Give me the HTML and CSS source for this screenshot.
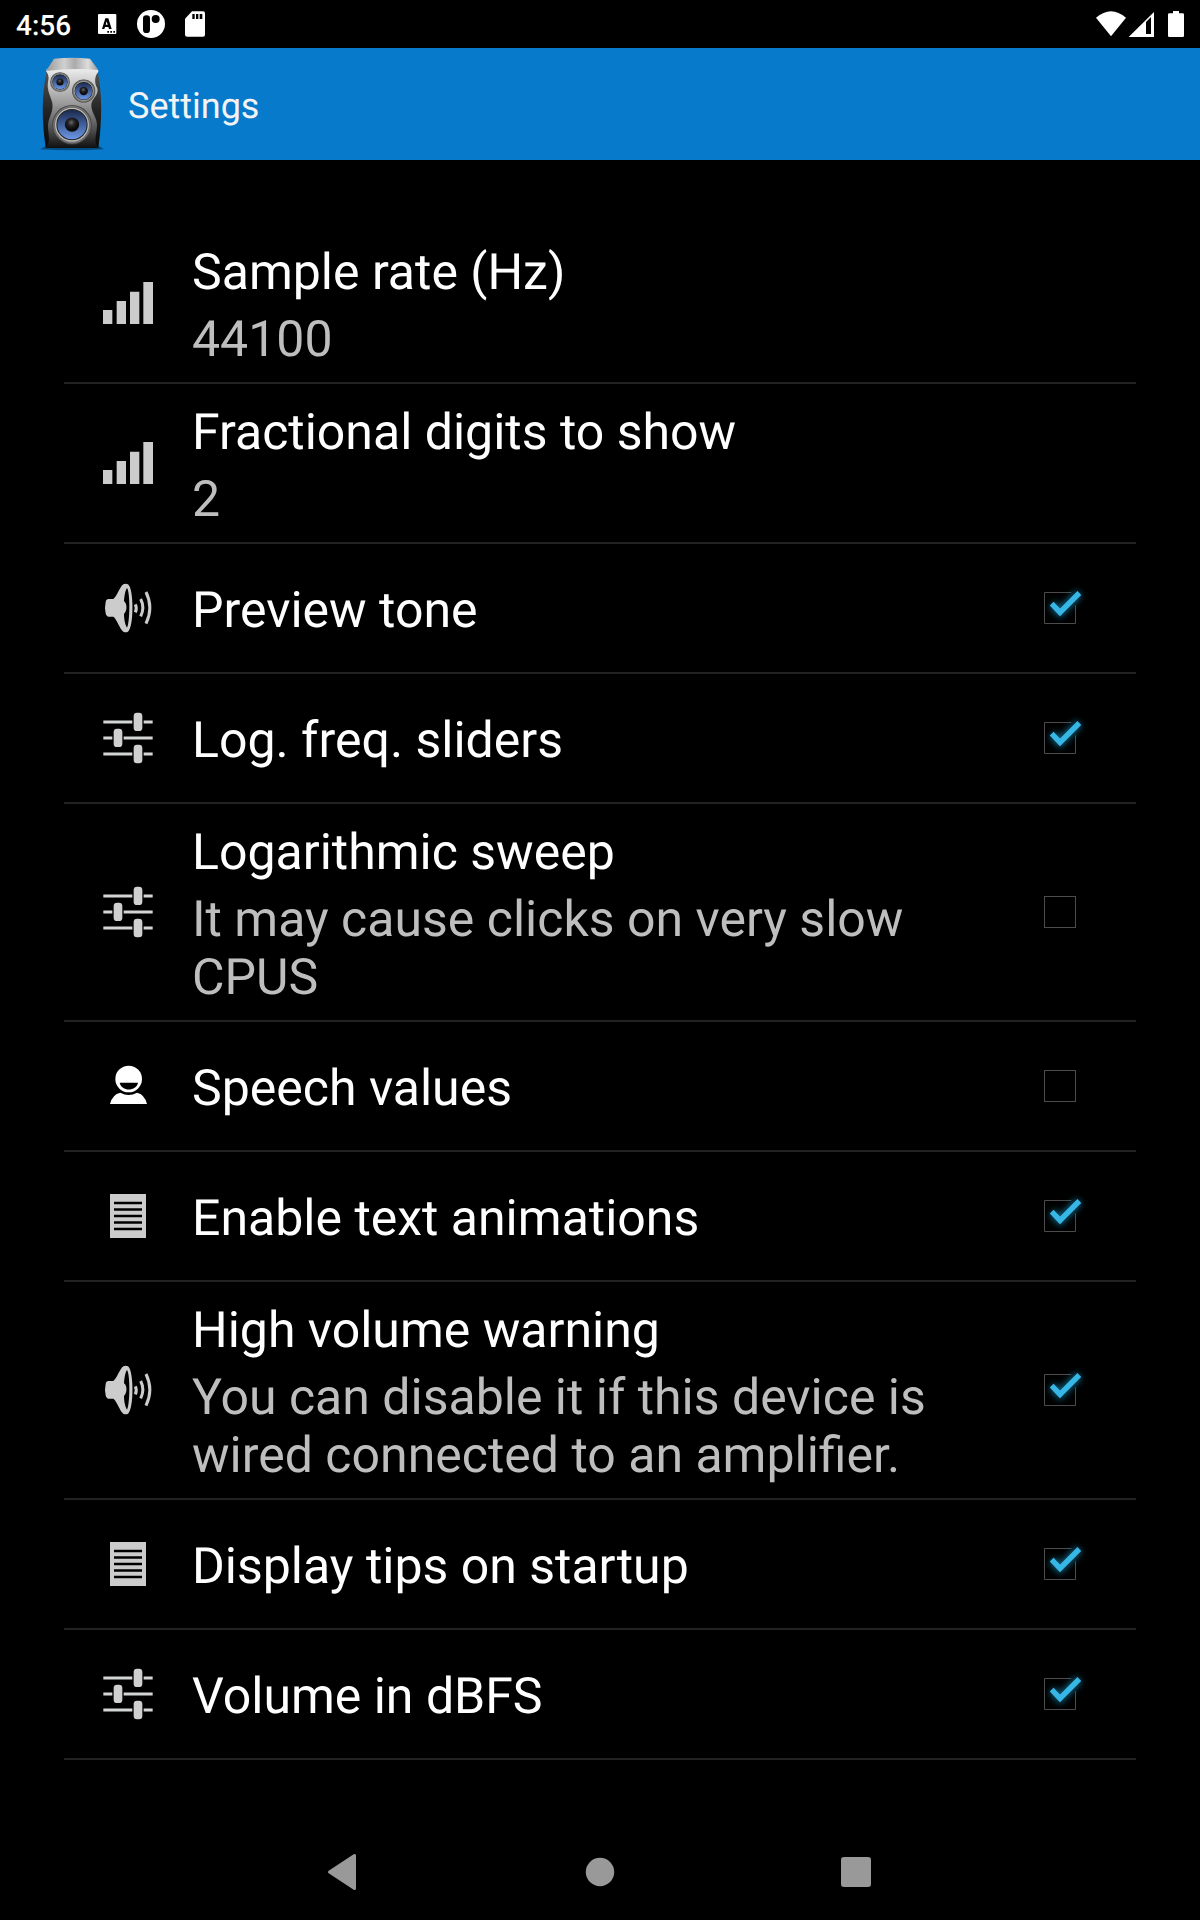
FILE: index.html
```html
<!DOCTYPE html>
<html lang="en">
<head>
  <meta charset="UTF-8">
  <meta name="viewport" content="width=device-width, initial-scale=1.0">
  <title>Settings</title>
  <link rel="stylesheet" href="styles.css">
</head>
<body>
  <!-- shared icons -->
  <svg class="defs" width="0" height="0">
    <symbol id="signal" viewBox="114 129 180 180">
      <path fill="#ccc" d="M129 240h28v42h-28zM170 213h28v69h-28zM210 185h28v97h-28zM250 156h29v126h-29z"/>
    </symbol>
    <symbol id="speaker" viewBox="24 24 180 180">
      <path fill="#ccc" d="M54 87H70C82 78 88 52 100 43Q107 40 114 43C132 55 132 173 114 185Q107 188 100 185C88 175 82 149 70 140H54Q47 138 47 130Q43 113 47 96Q47 88 54 87Z"/>
      <path fill="#000" d="M111 54C106 61 103 78 102 94C112 101 112 123 102 132C102 150 106 165 111 173C120 160 121 66 111 54Z"/>
      <path fill="none" stroke="#ccc" stroke-width="9" d="M136 103Q142 115 136 127M152 87Q165 113 152 139M168 66Q191 113 168 161"/>
    </symbol>
    <symbol id="sliders" viewBox="24 24 180 180">
      <path stroke="#d4d6d6" stroke-width="8.500" d="M40 66H127M161 66H188M40 114H67M101 114H188M40 162H127M161 162H188"/>
      <g fill="#d0d0d0">
        <rect x="131" y="38" width="26" height="55" rx="10"/>
        <rect x="71" y="86" width="26" height="55" rx="10"/>
        <rect x="131" y="134" width="26" height="56" rx="10"/>
      </g>
    </symbol>
    <symbol id="person" viewBox="24 18 180 180">
      <circle cx="116" cy="87" r="40" fill="#fff"/>
      <path fill="#000" d="M89 98H144C139 125 94 125 89 98Z"/>
      <path fill="#fff" d="M60 162Q67 133 91 128Q116 142 141 128Q164 133 171 162Z"/>
    </symbol>
    <symbol id="page" viewBox="24 18 180 180">
      <path fill="#ccc" d="M60 42H168V174H60Z"/>
      <path stroke="#000" stroke-width="7.5" d="M72 69H156M72 88.500H156M72 108H156M72 127.500H156M72 147H156"/>
    </symbol>
    <symbol id="unchecked" viewBox="30 54 180 180">
      <rect x="73.500" y="97.500" width="93" height="93" fill="none" stroke="#4c4c4c" stroke-width="3"/>
    </symbol>
    <symbol id="checked" viewBox="30 54 180 180">
      <path fill="none" stroke="#4c4c4c" stroke-width="3" d="M154 97.500H73.500V190.500H166.500V136"/>
      <path class="glow" d="M96 132L120 157L178 99"/>
      <path fill="none" stroke="#37b7e6" stroke-width="16" d="M95 131L120 157L178 99"/>
    </symbol>
  </svg>

  <header class="status-bar">
    <span class="time">4:56</span>
    <svg width="39" height="48" viewBox="291 0 117 144">
      <rect x="294" y="42" width="55" height="60" rx="3" fill="#fff"/>
      <path fill="#000" fill-rule="evenodd" d="M316 55H325L335 87H327L325 81H315L313 87H306ZM320 64L317 74H323Z"/>
      <path fill="#000" d="M322 93h5v5h-5zM331 93h5v5h-5zM340 93h5v5h-5z"/>
    </svg>
    <svg width="48" height="48" viewBox="408 0 144 144">
      <circle cx="453" cy="72" r="42" fill="#fff"/>
      <rect x="429" y="46" width="21" height="53" rx="10"/>
      <circle cx="467" cy="57" r="12"/>
    </svg>
    <svg width="30" height="48" viewBox="552 0 90 144">
      <path fill="#fff" d="M576 34H609Q615 34 615 40V104Q615 110 609 110H562Q555 110 555 104V56Z"/>
      <path fill="#000" d="M577 42h7v15h-7zM588 42h7v15h-7zM599 42h8v15h-8z"/>
    </svg>
    <div class="status-right">
      <svg width="33" height="48" viewBox="105 0 99 144">
        <path fill="#fff" d="M108 53Q153 14 198 53L153 109Z"/>
      </svg>
      <svg width="32" height="48" viewBox="204 0 96 144">
        <path fill="#fff" fill-rule="evenodd" d="M206 111L282 36V111ZM258 66V102H273V51Z"/>
      </svg>
      <svg width="32" height="48" viewBox="300 0 96 144">
        <path fill="#fff" d="M339 33H357V40H368Q372 40 372 44V107Q372 111 368 111H328Q324 111 324 107V44Q324 40 328 40H339Z"/>
      </svg>
    </div>
  </header>

  <div class="action-bar">
    <svg width="90" height="112" viewBox="0 9 270 336">
      <defs>
        <linearGradient id="top">
          <stop offset="0" stop-color="#999"/>
          <stop offset=".35" stop-color="#d0d0d0"/>
          <stop offset=".55" stop-color="#aaa"/>
          <stop offset=".8" stop-color="#ddd"/>
          <stop offset="1" stop-color="#999"/>
        </linearGradient>
        <linearGradient id="front" x2="0" y2="1">
          <stop offset="0" stop-color="#eee"/>
          <stop offset=".45" stop-color="#999"/>
          <stop offset=".75" stop-color="#555"/>
          <stop offset="1" stop-color="#111"/>
        </linearGradient>
        <linearGradient id="side" x2="0" y2="1">
          <stop offset="0" stop-color="#555"/>
          <stop offset=".5" stop-color="#252525"/>
          <stop offset="1" stop-color="#080808"/>
        </linearGradient>
        <linearGradient id="cone" x2="0" y2="1">
          <stop offset="0" stop-color="#1b2a4e"/>
          <stop offset=".5" stop-color="#41609c"/>
          <stop offset="1" stop-color="#6c98e6"/>
        </linearGradient>
        <radialGradient id="cap" cx=".45" cy=".35">
          <stop offset="0" stop-color="#666"/>
          <stop offset=".5" stop-color="#222"/>
          <stop offset="1" stop-color="#0b0b0b"/>
        </radialGradient>
        <g id="driver">
          <circle r="58" fill="#444"/>
          <circle r="54" fill="#666" stroke="#888" stroke-width="2"/>
          <circle r="48" fill="#222" stroke="#bbb" stroke-width="4"/>
          <circle r="43" fill="url(#cone)"/>
          <circle r="21" fill="url(#cap)"/>
        </g>
      </defs>
      <path fill="#024b80" d="M30 313L48 303H206L222 313Q126 319 30 313Z"/>
      <path fill="url(#side)" d="M50 78H203Q223 180 205 308H47Q28 180 50 78Z"/>
      <path fill="url(#front)" d="M48 78Q50 70 60 69H195Q206 72 205 80C194 93 192 112 202 130C207 152 185 160 184 180C183 201 201 217 201 240C201 270 188 288 206 308H47C65 287 53 268 54 240C56 215 71 201 67 175C62 150 48 137 55 105Q58 91 48 78Z"/>
      <path fill="url(#top)" d="M72 41Q126 35 180 41L205 75Q126 68 48 78Z"/>
      <use href="#driver" transform="translate(90 111) scale(.51)"/>
      <use href="#driver" transform="translate(161 138) scale(.6)"/>
      <use href="#driver" transform="translate(126 239) scale(1.02)"/>
    </svg>
    <h1>Settings</h1>
  </div>

  <main class="settings">
    <div class="row">
      <svg class="icon"><use href="#signal"/></svg>
      <div class="text">
        <div class="title">Sample rate (Hz)</div>
        <div class="summary">44100</div>
      </div>
    </div>
    <div class="row">
      <svg class="icon"><use href="#signal"/></svg>
      <div class="text">
        <div class="title">Fractional digits to show</div>
        <div class="summary">2</div>
      </div>
    </div>
    <div class="row">
      <svg class="icon"><use href="#speaker"/></svg>
      <div class="text"><div class="title">Preview tone</div></div>
      <svg class="check"><use href="#checked"/></svg>
    </div>
    <div class="row">
      <svg class="icon"><use href="#sliders"/></svg>
      <div class="text"><div class="title">Log. freq. sliders</div></div>
      <svg class="check"><use href="#checked"/></svg>
    </div>
    <div class="row">
      <svg class="icon"><use href="#sliders"/></svg>
      <div class="text">
        <div class="title">Logarithmic sweep</div>
        <div class="summary">It may cause clicks on very slow CPUS</div>
      </div>
      <svg class="check"><use href="#unchecked"/></svg>
    </div>
    <div class="row">
      <svg class="icon"><use href="#person"/></svg>
      <div class="text"><div class="title">Speech values</div></div>
      <svg class="check"><use href="#unchecked"/></svg>
    </div>
    <div class="row">
      <svg class="icon"><use href="#page"/></svg>
      <div class="text"><div class="title">Enable text animations</div></div>
      <svg class="check"><use href="#checked"/></svg>
    </div>
    <div class="row">
      <svg class="icon"><use href="#speaker"/></svg>
      <div class="text">
        <div class="title">High volume warning</div>
        <div class="summary">You can disable it if this device is wired connected to an amplifier.</div>
      </div>
      <svg class="check"><use href="#checked"/></svg>
    </div>
    <div class="row">
      <svg class="icon"><use href="#page"/></svg>
      <div class="text"><div class="title">Display tips on startup</div></div>
      <svg class="check"><use href="#checked"/></svg>
    </div>
    <div class="row">
      <svg class="icon"><use href="#sliders"/></svg>
      <div class="text"><div class="title">Volume in dBFS</div></div>
      <svg class="check"><use href="#checked"/></svg>
    </div>
  </main>

  <nav class="nav-bar">
    <svg width="32" height="32" viewBox="0 0 32 32">
      <path fill="#999" stroke="#999" stroke-width="3" stroke-linejoin="round" d="M1.500 16L26.500 -.5V32.500Z"/>
    </svg>
    <svg width="32" height="32" viewBox="0 0 32 32">
      <circle cx="16" cy="16" r="14.200" fill="#999"/>
    </svg>
    <svg width="32" height="32" viewBox="0 0 32 32">
      <rect x="1" y="1" width="30" height="30" rx="3" fill="#999"/>
    </svg>
  </nav>
</body>
</html>
```
FILE: styles.css
```css
body {
  margin: 0;
  height: 1920px;
  display: flex;
  flex-direction: column;
  background-color: #000;
  color: #fff;
  font-family: Roboto, sans-serif;
  text-rendering: geometricPrecision;
  overflow: hidden;
}
svg {
  display: block;
  flex-shrink: 0;
  overflow: visible;
}
.defs {
  position: absolute;
}
.status-bar {
  display: flex;
  height: 48px;
  padding: 0 8px 0 16px;
}
.time {
  width: 81px;
  font-size: 28px;
  font-weight: 500;
  line-height: 52px;
}
.status-right {
  display: flex;
  margin-left: auto;
}
.action-bar {
  display: flex;
  align-items: center;
  height: 112px;
  padding-left: 30px;
  background-color: #077acb;
}
.action-bar h1 {
  margin: 0 0 0 8px;
  padding-top: 4px;
  color: #f3f3f3;
  font-size: 36px;
  font-weight: 400;
  line-height: 42px;
}
.settings {
  flex: 1;
  padding: 64px 64px 0;
}
.row {
  display: flex;
  align-items: center;
  padding: 12px 46px 12px 0;
  min-height: 104px;
  border-bottom: 2px solid #222;
}
.icon {
  width: 60px;
  height: 60px;
  margin: 0 34px;
}
.text {
  width: 740px;
  font-size: 50px;
  line-height: 58px;
}
.title,
.summary {
  padding: 8px 0 1px;
}
.title:only-child {
  padding-bottom: 2px;
}
.summary {
  color: #bebebe;
}
.check {
  width: 60px;
  height: 60px;
  margin-left: auto;
}
.glow {
  fill: none;
  stroke: #1683ad;
  stroke-width: 26;
  opacity: 0.7;
  filter: blur(9px);
}
.nav-bar {
  display: flex;
  justify-content: center;
  align-items: center;
  gap: 224px;
  height: 96px;
}
```
